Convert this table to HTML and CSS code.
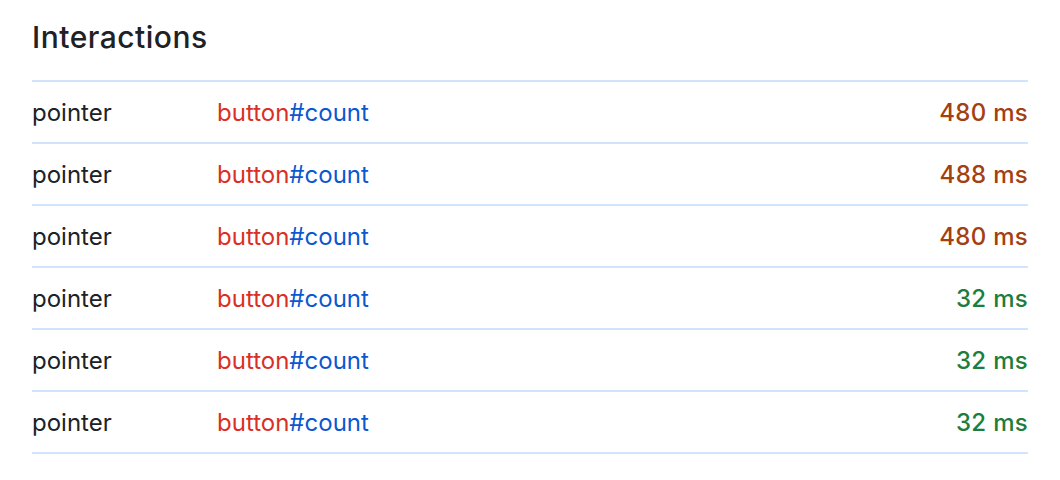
FILE: index.html
```html
<!DOCTYPE html>
<html>
<head>
<meta charset="utf-8">
<link rel="stylesheet" href="styles.css">
</head>
<body>
<section class="panel">
  <h2 class="title">Interactions</h2>
  <div class="list">
    <div class="row"><span class="type">pointer</span><span class="target"><span class="tag">button</span><span class="id">#count</span></span><span class="dur slow">480 ms</span></div>
    <div class="row"><span class="type">pointer</span><span class="target"><span class="tag">button</span><span class="id">#count</span></span><span class="dur slow">488 ms</span></div>
    <div class="row"><span class="type">pointer</span><span class="target"><span class="tag">button</span><span class="id">#count</span></span><span class="dur slow">480 ms</span></div>
    <div class="row"><span class="type">pointer</span><span class="target"><span class="tag">button</span><span class="id">#count</span></span><span class="dur fast">32 ms</span></div>
    <div class="row"><span class="type">pointer</span><span class="target"><span class="tag">button</span><span class="id">#count</span></span><span class="dur fast">32 ms</span></div>
    <div class="row"><span class="type">pointer</span><span class="target"><span class="tag">button</span><span class="id">#count</span></span><span class="dur fast">32 ms</span></div>
  </div>
</section>
</body>
</html>
```
FILE: styles.css
```css
html, body {
  margin: 0;
  background: #fff;
}
body {
  font-family: Inter, "Noto Sans", sans-serif;
  color: #202124;
}
.panel {
  padding: 0 32px;
}
.title {
  margin: 0;
  font-size: 30px;
  font-weight: 500;
  letter-spacing: 0.5px;
  line-height: 36px;
  height: 82px;
  padding-top: 19px;
  border-bottom: 2px solid #d2e3fc;
  box-sizing: border-box;
}
.row {
  display: flex;
  align-items: center;
  height: 62px;
  box-sizing: border-box;
  border-bottom: 2px solid #d2e3fc;
  font-size: 24px;
  padding-top: 1px;
}
.type {
  width: 185px;
}
.target {
  flex: 1;
}
.tag { color: #d93025; }
.id { color: #0b57d0; }
.dur { font-weight: 500; letter-spacing: 0.3px; }
.slow { color: #a3400f; }
.fast { color: #1e7d3a; }
```
